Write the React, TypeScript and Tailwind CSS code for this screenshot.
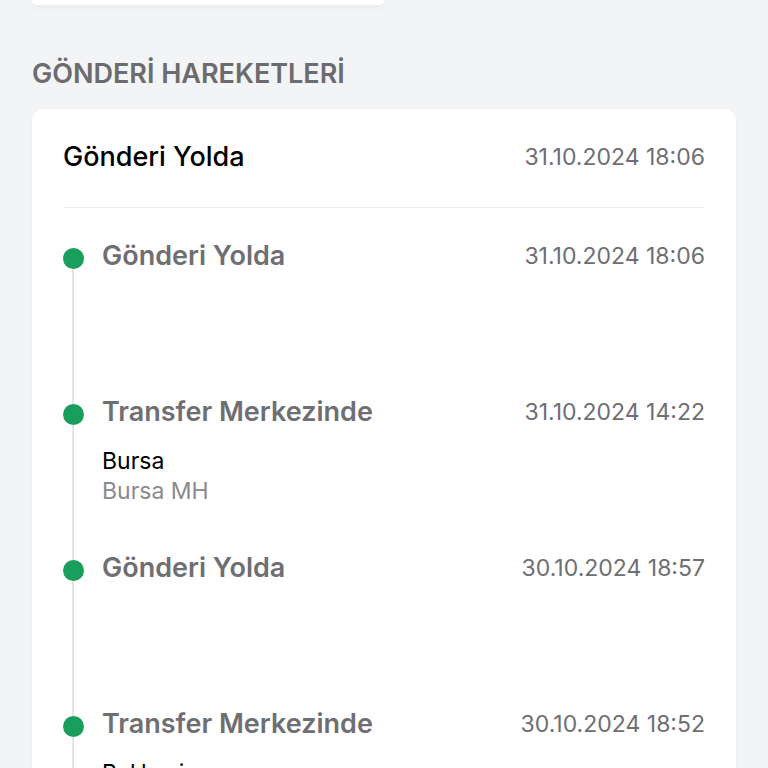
// Gönderi takip — hareket geçmişi zaman çizelgesi
type Movement = {
  title: string;
  date: string;
  city?: string;
  branch?: string;
};

const MOVEMENTS: Movement[] = [
  { title: 'Gönderi Yolda', date: '31.10.2024 18:06' },
  { title: 'Transfer Merkezinde', date: '31.10.2024 14:22', city: 'Bursa', branch: 'Bursa MH' },
  { title: 'Gönderi Yolda', date: '30.10.2024 18:57' },
  { title: 'Transfer Merkezinde', date: '30.10.2024 18:52', city: 'Balıkesir', branch: 'Balıkesir MH' },
];

export default function App() {
  return (
    <div
      className="min-h-[768px] h-[768px] overflow-hidden bg-[#f3f4f6] px-8"
      style={{ fontFamily: 'Inter, "Noto Sans", sans-serif' }}
    >
      {/* üstteki kart (kesik) */}
      <div className="h-[5px] w-[352px] rounded-b-xl bg-white shadow-[0_2px_6px_rgba(0,0,0,0.06)]" />

      {/* başlık */}
      <h2 className="mt-[53px] text-[27px] leading-8 font-semibold text-[#6b6b70]">
        GÖNDERİ HAREKETLERİ
      </h2>

      {/* hareketler kartı */}
      <div className="mt-[19px] rounded-xl bg-white px-[31px] pt-8 shadow-[0_1px_4px_rgba(0,0,0,0.04)]">
        <div className="flex items-center justify-between pb-[34px] border-b border-[#ececef]">
          <p className="text-[27px] leading-8 font-medium text-black">Gönderi Yolda</p>
          <p className="text-[23px] leading-8 text-[#6e6e73]">31.10.2024 18:06</p>
        </div>

        <div className="pt-[32px]">
          {MOVEMENTS.map((m, i) => (
            <div key={i} className="flex">
              <div className="flex w-5 flex-col items-center">
                <div className={`h-[8px] w-[2px] ${i > 0 ? 'bg-[#e4e4e7]' : ''}`} />
                <div className="h-[21px] w-[21px] rounded-full bg-[#1a9e5c]" />
                <div className="w-[2px] flex-1 bg-[#e4e4e7]" />
              </div>
              <div className="ml-[19px] min-h-[156px] flex-1">
                <div className="flex items-center justify-between">
                  <p className="text-[27px] leading-8 font-semibold text-[#6e6e73]">{m.title}</p>
                  <p className="text-[23px] leading-8 text-[#6e6e73]">{m.date}</p>
                </div>
                {m.city && (
                  <div className="mt-[18px]">
                    <p className="text-[23px] leading-[30px] text-black">{m.city}</p>
                    <p className="text-[23px] leading-[30px] text-[#8a8a8e]">{m.branch}</p>
                  </div>
                )}
              </div>
            </div>
          ))}
        </div>
      </div>
    </div>
  );
}
